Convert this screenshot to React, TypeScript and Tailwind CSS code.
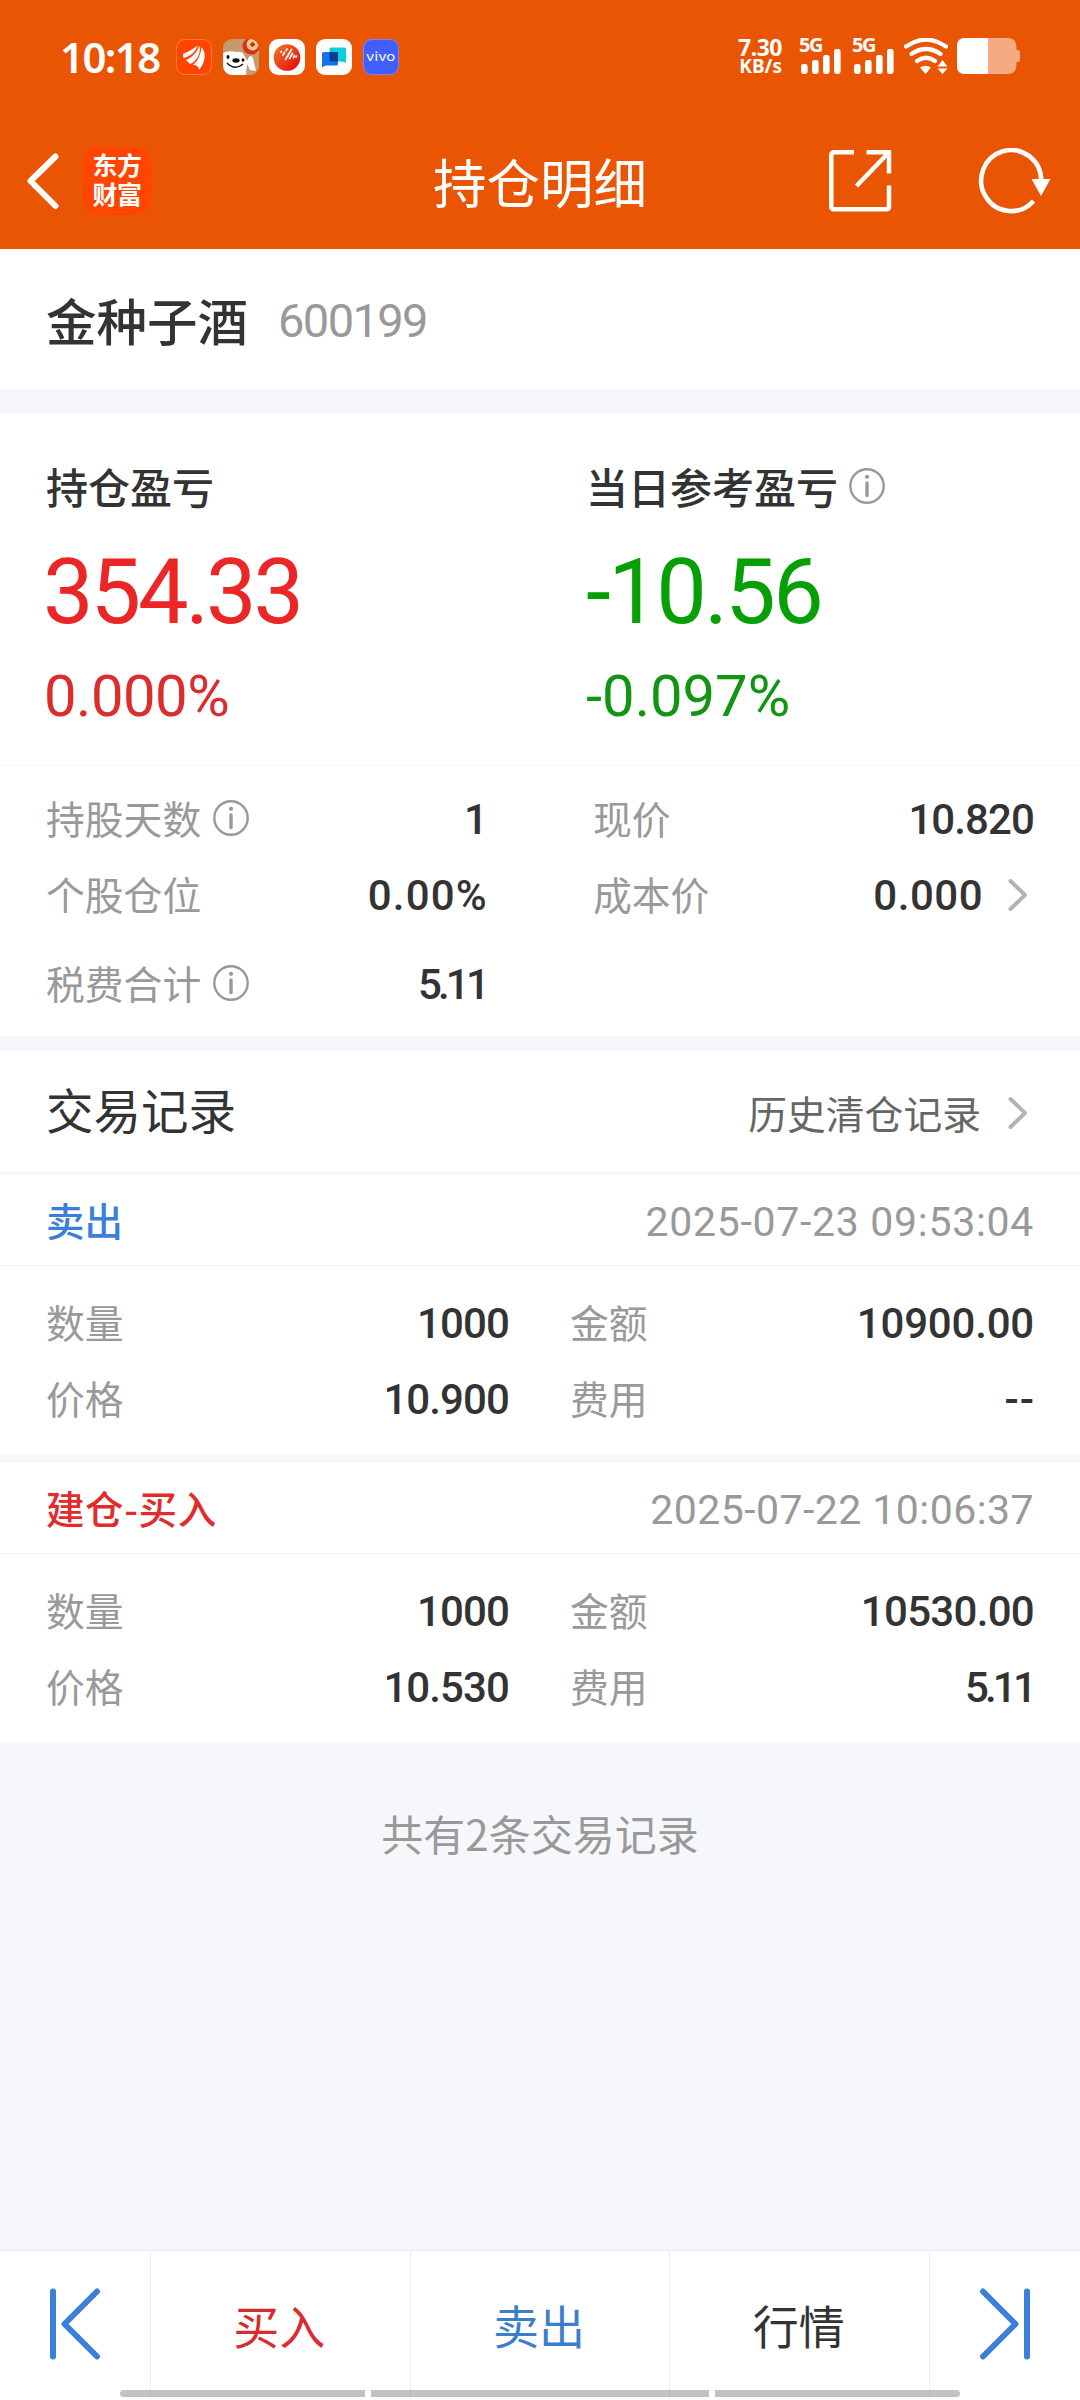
import type { ReactNode } from 'react'

type TradeRecord = {
    title: string
    titleClass: string
    time: string
    timeClass: string
    amount: string
    total: string
    price: string
    fee: string
}

const records: TradeRecord[] = [
    {
        title: '卖出',
        titleClass: 'text-[#3b7fd9]',
        time: '2025-07-23 09:53:04',
        timeClass: 'tracking-[0.7px]',
        amount: '1000',
        total: '10900.00',
        price: '10.900',
        fee: '--',
    },
    {
        title: '建仓-买入',
        titleClass: 'text-[#e22b2b] tracking-[0.6px]',
        time: '2025-07-22 10:06:37',
        timeClass: 'tracking-[0.45px]',
        amount: '1000',
        total: '10530.00',
        price: '10.530',
        fee: '5.11',
    },
]

// digits are proportional in the app, so a few values need their own spacing
const valueTracking: Record<string, string> = {
    '5.11': 'tracking-[-3.8px] pr-[1px]',
    '0.00%': 'tracking-[1.2px] -mr-[1px]',
    '0.000': 'tracking-[0.5px]',
    '10900.00': 'tracking-[-0.2px]',
    '10530.00': 'tracking-[-0.7px]',
    '--': 'tracking-[1px] -mr-[1px]',
}

function InfoIcon({ className = '' }: { className?: string }) {
    return (
        <svg viewBox="0 0 36 36" className={`h-9 w-9 shrink-0 ${className}`} fill="none">
            <circle cx="18" cy="18" r="16.7" stroke="#999" strokeWidth="2.4" />
            <circle cx="18" cy="8.8" r="2.1" fill="#999" />
            <path d="M18 15v12.5" stroke="#999" strokeWidth="3.4" strokeLinecap="round" />
        </svg>
    )
}

function Chevron() {
    return (
        <svg viewBox="0 0 20 34" className="h-[34px] w-5 shrink-0" fill="none">
            <path d="M2.5 3 L17 17 L2.5 31" stroke="#b3b3b3" strokeWidth="4" strokeLinecap="round" strokeLinejoin="round" />
        </svg>
    )
}

function Signal() {
    return (
        <div className="h-9 w-[42px]">
            <div className="h-[11px] font-['Noto_Sans'] text-[20px] font-bold leading-[13px] tracking-[-1.5px]">5G</div>
            <svg viewBox="0 0 42 25" className="h-[25px] w-[42px]" fill="white">
                <rect x="2" y="15" width="6.6" height="10" rx="2.4" />
                <rect x="13" y="11" width="6.6" height="14" rx="2.4" />
                <rect x="24" y="6" width="6.6" height="19" rx="2.4" />
                <rect x="35" y="0" width="6.6" height="25" rx="2.4" />
            </svg>
        </div>
    )
}

function StatusBar() {
    return (
        <div className="flex h-[113px] items-center pl-[60px] pr-[59px]">
            <span className="w-[116px] font-['Noto_Sans'] text-[42px] font-semibold leading-none tracking-[-1.6px]">10:18</span>
            <div className="flex gap-[10.700px]">
                <svg viewBox="0 0 36 36" className="h-9 w-9">
                    <rect x="0.5" y="0.5" width="35" height="35" rx="8.5" fill="#ff4500" stroke="#ff7a45" />
                    <path d="M7 15 C14 12 18 9 22 6.500 C19 13 15 17 7.500 19 Z M10 21 C17 18 21 13 23.500 6.500 C25 15 21 22 14 25 Z M17 26 C22 22 25 15 25.500 8 C31 15 29 24 23 31 C23 28 21 26 17 26 Z" fill="white" />
                </svg>
                <svg viewBox="0 0 36 36" className="h-9 w-9">
                    <clipPath id="dogClip">
                        <rect width="36" height="36" rx="9" />
                    </clipPath>
                    <g clipPath="url(#dogClip)">
                        <rect width="36" height="36" fill="#c69a6b" />
                        <circle cx="28" cy="7" r="8.500" fill="#d7301c" />
                        <circle cx="29.500" cy="5.500" r="6" fill="#f5c98a" />
                        <rect x="27.500" y="3.500" width="4" height="4" fill="#c4301c" transform="rotate(45 29.500 5.500)" />
                        <path d="M0 14 Q6 11 14 13 Q20 12 22 18 L24 22 Q27 14 30 19 L33 32 L27 31 L24 25 L23 36 H5 Q0 34 0 26 Z" fill="white" />
                        <ellipse cx="13" cy="21.500" rx="3.600" ry="2.200" fill="#111" />
                        <ellipse cx="5" cy="18" rx="1.500" ry="2" fill="#111" />
                        <ellipse cx="20" cy="21" rx="1.500" ry="1.800" fill="#111" />
                        <path d="M4 24 Q12 32 20 25" stroke="#111" strokeWidth="1.300" fill="none" />
                    </g>
                </svg>
                <svg viewBox="0 0 36 36" className="h-9 w-9">
                    <defs>
                        <linearGradient id="ball" x1="0" y1="0" x2="1" y2="1">
                            <stop offset="0" stopColor="#f08020" />
                            <stop offset="1" stopColor="#e80010" />
                        </linearGradient>
                    </defs>
                    <rect width="36" height="36" rx="9" fill="white" />
                    <circle cx="18" cy="18.500" r="13.300" fill="url(#ball)" />
                    <path d="M12 13.200 l0.500 -0.800 M14 16 l1.500 -2.500 M16.500 20.500 l6 -10 M20.500 19.500 l3 -5 M25.500 16.500 l-1 2 M17 11.500 l1 -1.500 M27 18 l0.500 -0.800" stroke="white" strokeWidth="1.700" strokeLinecap="round" />
                </svg>
                <svg viewBox="0 0 36 36" className="h-9 w-9">
                    <rect width="36" height="36" rx="9" fill="white" />
                    <path d="M15 8.500 h13.500 q1.500 0 1.500 1.500 v14 q-2 -1.500 -5 -1.500 h-11.500 v-12.500 q0 -1.500 1.500 -1.500z" fill="#0bd0dc" />
                    <path d="M7.500 13 h14.500 v12 q0 1.500 -1.500 1.500 h-9.500 q-3 0 -5 2 v-14 q0 -1.500 1.500 -1.500z" fill="#1673ea" />
                    <path d="M13.500 13 h8.500 v9.500 h-7 q-1.500 0 -1.500 -1.500z" fill="#0b3f94" />
                </svg>
                <div className="flex h-9 w-9 items-center justify-center rounded-[9px] border border-[#7b83ff] bg-[#415fff]">
                    <span className="scale-x-125 font-['Inter'] text-[12px] leading-none">vivo</span>
                </div>
            </div>
            <div className="ml-auto flex items-start">
                <div className="text-right font-['Noto_Sans'] font-bold">
                    <div className="text-[23px] leading-[18px] tracking-[-0.500px]">7.30</div>
                    <div className="text-[19px] leading-[20px]">KB/s</div>
                </div>
                <div className="ml-[17px] flex gap-[11px]">
                    <Signal />
                    <Signal />
                </div>
                <svg viewBox="0 0 44 36" className="ml-[10px] h-9 w-11" fill="none">
                    <path d="M2 8.500 Q22 -5.500 42 8.500 M7.500 16 Q22 6 36.500 16 M13 23 Q22 16.500 31 23" stroke="white" strokeWidth="4.200" strokeLinecap="round" />
                    <path d="M16 29.500 Q21.500 26 27 29.500 L21.500 36 Z M38.500 22 L43.500 28.500 H33.500 Z M33.500 30.500 H43.500 L38.500 36 Z" fill="white" />
                </svg>
                <svg viewBox="0 0 64 36" className="ml-[9px] h-9 w-16">
                    <clipPath id="battery">
                        <path d="M8 0 H51 Q59 0 59.500 9 V12 Q63 12 63 14 V22 Q63 24 59.500 24 V27 Q59 36 51 36 H8 Q0 36 0 28 V8 Q0 0 8 0Z" />
                    </clipPath>
                    <g clipPath="url(#battery)">
                        <rect width="64" height="36" fill="#f6aa84" />
                        <rect width="31" height="36" fill="white" />
                    </g>
                </svg>
            </div>
        </div>
    )
}

function TitleBar() {
    return (
        <div className="flex h-[136px] items-center pb-[1px]">
            <div className="flex w-[360px] items-center">
                <svg viewBox="0 0 34 58" className="ml-[26px] h-[58px] w-[34px]" fill="none">
                    <path d="M29.500 4.500 L4.500 29 L29.500 54" stroke="white" strokeWidth="6" strokeLinecap="round" strokeLinejoin="round" />
                </svg>
                <div className="ml-[23px] flex h-[68px] w-[68px] flex-col items-center justify-center rounded-[15px] bg-[#ff4500] pb-[4px] text-[25px] font-bold leading-[29px] tracking-[-0.5px]">
                    <span>东方</span>
                    <span>财富</span>
                </div>
            </div>
            <h1 className="flex-1 text-center text-[53.500px] font-normal leading-none">持仓明细</h1>
            <div className="flex w-[360px] items-center justify-end pr-7">
                <svg viewBox="0 0 64 64" className="h-16 w-16" fill="none" stroke="white" strokeWidth="4.500">
                    <path d="M26 3.300 H6 Q3.300 3.300 3.300 6 V57.500 Q3.300 60.300 6 60.300 H58 Q61 60.300 61 57.500 V36.500 M38.500 3.300 H61 V24.500 M61 3.300 L28.500 37" />
                </svg>
                <svg viewBox="0 0 74 66" className="ml-[86px] h-[66px] w-[74px]" fill="none">
                    <path d="M55.500 53 A30 30.500 0 1 1 63.200 32.500" stroke="white" strokeWidth="4.600" />
                    <path d="M53.500 31 H72.500 L63 48 Z" fill="white" />
                </svg>
            </div>
        </div>
    )
}

function StatRow({ label, value, info, className }: { label: string; value: string; info?: boolean; className: string }) {
    return (
        <div className={`flex items-center ${className}`}>
            <span className="pb-[5px] text-[38.800px] leading-none text-[#999]">{label}</span>
            {info && <InfoIcon className="mb-[3px] ml-3" />}
            <span className={`ml-auto pt-[1px] font-['Roboto'] text-[42px] font-medium leading-none ${valueTracking[value] ?? 'tracking-[-0.9px]'}`}>
                {value}
            </span>
        </div>
    )
}

function ProfitBlock({ title, children }: { title: ReactNode; children: ReactNode }) {
    return (
        <div className="w-[540px] shrink-0 font-['Roboto']">
            <div className="flex items-center font-['Noto_Sans_CJK_SC',sans-serif] text-[42px] font-medium leading-[42px]">{title}</div>
            {children}
        </div>
    )
}

function RecordCard({ record }: { record: TradeRecord }) {
    const cells = [
        ['数量', record.amount, '金额', record.total],
        ['价格', record.price, '费用', record.fee],
    ]

    return (
        <section className="bg-white">
            <div className="flex h-[91px] items-center justify-between border-b border-[#f2f4f6] px-[46px]">
                <span className={`pb-[2px] text-[38.500px] font-medium leading-none ${record.titleClass}`}>{record.title}</span>
                <span className={`pt-[4px] font-['Roboto'] text-[41px] leading-none text-[#999] ${record.timeClass}`}>{record.time}</span>
            </div>
            <div className="h-[188px] px-[46px] pt-5">
                {cells.map(([leftLabel, leftValue, rightLabel, rightValue]) => (
                    <div key={leftLabel} className="flex h-[76px] items-center">
                        <StatRow label={leftLabel} value={leftValue} className="w-[463px]" />
                        <StatRow label={rightLabel} value={rightValue} className="ml-[61px] flex-1" />
                    </div>
                ))}
            </div>
        </section>
    )
}

export default function App() {
    return (
        <div className="flex h-[2400px] w-[1080px] flex-col overflow-hidden bg-[#f6f7fa] font-['Noto_Sans_CJK_SC',sans-serif] text-[#333]">
            <header className="h-[249px] bg-[#ea5504] text-white">
                <StatusBar />
                <TitleBar />
            </header>

            <section className="flex h-[140px] items-center bg-white px-[46px]">
                <span className="text-[50.500px] font-medium leading-none">金种子酒</span>
                <span className="ml-[30px] pt-[3px] font-['Roboto'] text-[47px] leading-none tracking-[-1.600px] text-[#999]">600199</span>
            </section>

            <section className="mt-6 bg-white">
                <div className="flex h-[353px] border-b border-[#f2f4f6] pl-[46px] pt-[52px]">
                    <ProfitBlock title="持仓盈亏">
                        <div className="-ml-[3px] mt-[38px] text-[90px] leading-[96px] tracking-[-3.100px] text-[#eb2626]">354.33</div>
                        <div className="-ml-[2px] mt-[19px] text-[58px] leading-[72px] tracking-[-0.500px] text-[#dc2c2c]">0.000%</div>
                    </ProfitBlock>
                    <ProfitBlock
                        title={
                            <>
                                当日参考盈亏
                                <InfoIcon className="ml-[11px]" />
                            </>
                        }
                    >
                        <div className="mt-[38px] text-[90px] leading-[96px] tracking-[-2.600px] text-[#069f06]">-10.56</div>
                        <div className="mt-[19px] text-[58px] leading-[72px] text-[#129612]">-0.097%</div>
                    </ProfitBlock>
                </div>
                <div className="h-[270px] px-[46px] pt-4">
                    <div className="flex h-[76px] items-center">
                        <StatRow label="持股天数" value="1" info className="w-[441px]" />
                        <StatRow label="现价" value="10.820" className="ml-[106px] flex-1" />
                    </div>
                    <div className="flex h-[76px] items-center">
                        <StatRow label="个股仓位" value="0.00%" className="w-[441px]" />
                        <StatRow label="成本价" value="0.000" className="ml-[106px] flex-1" />
                        <div className="mb-[3px] ml-[25px] mr-[6px]">
                            <Chevron />
                        </div>
                    </div>
                    <div className="flex h-[102px] items-center">
                        <StatRow label="税费合计" value="5.11" info className="w-[441px]" />
                    </div>
                </div>
            </section>

            <section className="mt-[15px] flex h-[120px] items-center bg-white pl-[46px] pr-[52px]">
                <h2 className="pb-[4px] text-[47.500px] font-normal leading-none">交易记录</h2>
                <span className="ml-auto mr-[27px] pt-[2px] text-[38.800px] leading-none text-[#666]">历史清仓记录</span>
                <div className="pt-[3px]">
                    <Chevron />
                </div>
            </section>

            <div className="mt-1 flex flex-col gap-[9px]">
                {records.map((record) => (
                    <RecordCard key={record.time} record={record} />
                ))}
            </div>

            <p className="mt-[70px] text-center text-[42px] leading-none text-[#999]">共有2条交易记录</p>

            <nav className="relative mt-auto flex h-[150px] border-t border-[#e6eaed] bg-white text-[46px]">
                <div className="flex w-[151px] items-center justify-center border-r border-[#ebedf0] pb-[4px]">
                    <svg viewBox="0 0 52 74" className="h-[74px] w-[52px]" fill="none" stroke="#3b7fd9" strokeWidth="6" strokeLinecap="round" strokeLinejoin="round">
                        <path d="M4 4.500 V69.500 M48 4.500 L15.500 37 L48 69.500" />
                    </svg>
                </div>
                <div className="flex flex-1 items-center justify-center border-r border-[#ebedf0] pb-[2px] pr-[2px] text-[#d92c2c]">买入</div>
                <div className="flex flex-1 items-center justify-center border-r border-[#ebedf0] pb-[2px] pr-[2px] text-[#3b7fcb]">卖出</div>
                <div className="flex flex-1 items-center justify-center border-r border-[#ebedf0] pb-[2px] pr-[2px]">行情</div>
                <div className="flex w-[150px] items-center justify-center pb-[4px]">
                    <svg viewBox="0 0 52 74" className="h-[74px] w-[52px]" fill="none" stroke="#3b7fd9" strokeWidth="6" strokeLinecap="round" strokeLinejoin="round">
                        <path d="M48 4.500 V69.500 M4 4.500 L36.500 37 L4 69.500" />
                    </svg>
                </div>
                {/* system gesture handle */}
                <div className="absolute inset-x-[120px] bottom-[3px] flex h-[7px] gap-[6px]">
                    <div className="w-[245px] rounded-l-full bg-[#aeaeae]/75" />
                    <div className="flex-1 bg-[#aeaeae]/75" />
                    <div className="w-[245px] rounded-r-full bg-[#aeaeae]/75" />
                </div>
            </nav>
        </div>
    )
}
